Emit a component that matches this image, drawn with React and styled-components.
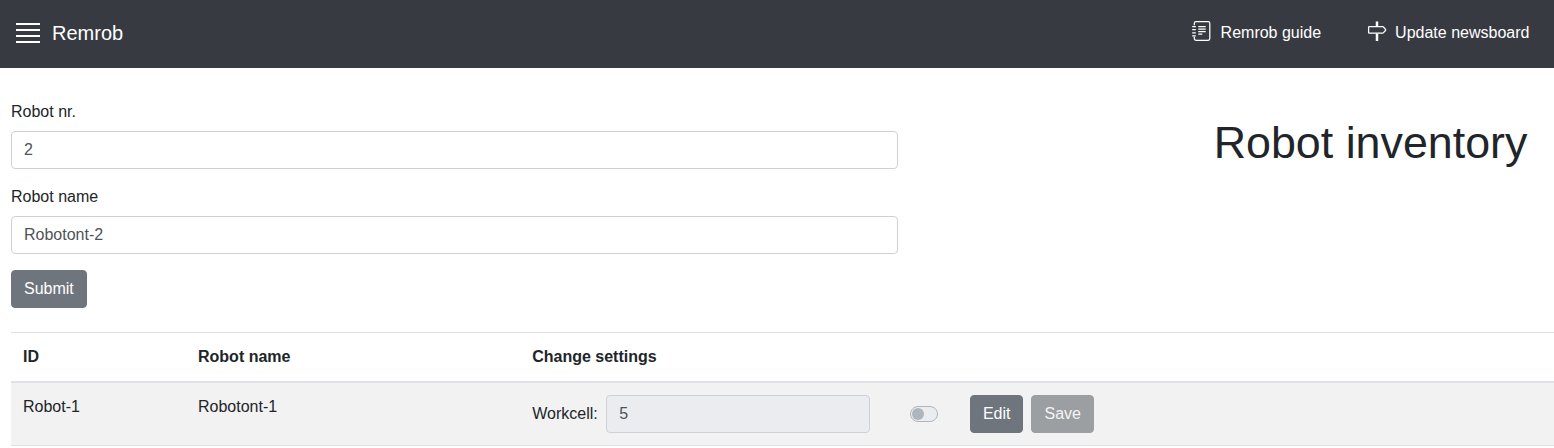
import React from "react";
import styled, { createGlobalStyle, css } from "styled-components";

const GlobalStyle = createGlobalStyle`
  *, *::before, *::after { box-sizing: border-box; }
  html, body { height: 100%; overflow: hidden; }
  body {
    margin: 0;
    background: #fff;
    color: #212529;
    font-family: "Liberation Sans", Arial, sans-serif;
    font-size: 16px;
    line-height: 1.5;
  }
  input, button { font: inherit; }
`;

const Navbar = styled.header`
  display: flex;
  align-items: center;
  height: 68px;
  padding: 0 24.6px 2px 16px;
  background: #373a41;
  color: #fff;
`;

const MenuButton = styled.button`
  display: flex;
  padding: 0;
  border: 0;
  background: none;
  color: inherit;
`;

const Brand = styled.span`
  margin-left: 12px;
  font-size: 20px;
  line-height: 30px;
`;

const NavLinks = styled.nav`
  display: flex;
  gap: 46px;
  margin-left: auto;
`;

const NavLink = styled.a`
  display: flex;
  align-items: center;
  gap: ${(p) => p.$gap || "9px"};
  height: 24px;
  color: #fff;

  svg { margin-bottom: 4px; }
`;

const Main = styled.main`
  padding: 32px 0 0 11px;
`;

const TopSection = styled.section`
  display: flex;
  justify-content: space-between;
  align-items: flex-start;
  padding-right: 26.6px;
`;

const RobotForm = styled.form`
  width: 887px;
`;

const Field = styled.div`
  margin-bottom: 16px;
`;

const Label = styled.label`
  display: block;
  height: 24px;
  margin-bottom: 7px;
`;

const Input = styled.input`
  display: block;
  width: ${(p) => p.$width || "100%"};
  height: 38px;
  padding: 6px 12px;
  border: 1px solid #ced2d8;
  border-radius: 4px;
  background: #fff;
  color: #4f5358;

  &:disabled { background: #ebecf0; }
`;

const Button = styled.button`
  height: 38px;
  padding: 6px 12px;
  border: 1px solid #6f757d;
  border-radius: 4px;
  background: #6f757d;
  color: #fff;

  ${(p) =>
    p.disabled &&
    css`
      border-color: #9b9fa2;
      background: #9b9fa2;
      color: #f4f4f4;
    `}
`;

const Title = styled.h1`
  margin: 15px 0 0;
  font-size: 44.8px;
  font-weight: 400;
  line-height: 54px;
`;

const Table = styled.table`
  width: 100%;
  margin-top: 24px;
  border-collapse: separate;
  border-spacing: 0;
  table-layout: fixed;
`;

const HeadCell = styled.th`
  width: ${(p) => p.$width || "auto"};
  height: 51px;
  padding: 0 12px;
  border-top: 1px solid #dee2e6;
  border-bottom: 2px solid #dee2e6;
  font-weight: 700;
  text-align: left;
`;

const Cell = styled.td`
  height: 63px;
  padding: 12px 12px 0;
  border-bottom: 1px solid #dee2e6;
  background: #f2f2f2;
  vertical-align: top;
`;

const Settings = styled.div`
  display: flex;
  align-items: center;
`;

const WorkcellLabel = styled.label`
  width: 74px;
`;

const Switch = styled.span`
  display: flex;
  align-items: center;
  width: 28px;
  height: 16px;
  margin: 0 31.7px 0 40px;
  padding: 1px;
  border: 1px solid #adb5bd;
  border-radius: 8px;
  background: #ebecf0;

  &::before {
    content: "";
    width: 12px;
    height: 12px;
    border-radius: 50%;
    background: #adb5bd;
  }
`;

const ButtonGroup = styled.div`
  display: flex;
  gap: 8px;
`;

const MenuIcon = () => (
  <svg width="24" height="24" viewBox="0 0 24 24" fill="currentColor">
    <path d="M0 2h24v2H0zM0 8h24v2H0zM0 14h24v2H0zM0 20h24v2H0z" />
  </svg>
);

const GuideIcon = () => (
  <svg width="20" height="20" viewBox="0 0 20 20" fill="none" stroke="currentColor" strokeWidth="1.25">
    <path d="M3.3 4.2V2.4Q3.3.7 5 .7h12.2q1.6 0 1.6 1.7v15.2q0 1.7-1.6 1.7H5q-1.7 0-1.7-1.7v-1.8" />
    <path d="M1.2 5.7h3.6M1.2 8.7h3.6M1.2 11.8h3.6M1.2 14.8h3.6M7.3 5.6h7.4M7.3 8.1h7.4M7.3 10.6h7.4M7.3 13.1h4" />
  </svg>
);

const SignpostIcon = () => (
  <svg width="20" height="20" viewBox="0 0 20 20" fill="none" stroke="currentColor">
    <path d="M10 .6V5M10 12.5V20" strokeWidth="2.5" />
    <path d="M2.2 5.5h13.3q.6 0 1 .5l2 2.3q.5.6 0 1.2l-2 2.2q-.4.5-1 .5H2.2q-.6 0-.6-.6V6.1q0-.6.6-.6Z" strokeWidth="1.25" />
  </svg>
);

export default function App() {
  return (
    <>
      <GlobalStyle />
      <Navbar>
        <MenuButton aria-label="Menu"><MenuIcon /></MenuButton>
        <Brand>Remrob</Brand>
        <NavLinks>
          <NavLink $gap="10px"><GuideIcon />Remrob guide</NavLink>
          <NavLink $gap="8px"><SignpostIcon />Update newsboard</NavLink>
        </NavLinks>
      </Navbar>
      <Main>
        <TopSection>
          <RobotForm>
            <Field>
              <Label htmlFor="nr">Robot nr.</Label>
              <Input id="nr" defaultValue="2" />
            </Field>
            <Field>
              <Label htmlFor="name">Robot name</Label>
              <Input id="name" defaultValue="Robotont-2" />
            </Field>
            <Button type="button">Submit</Button>
          </RobotForm>
          <Title>Robot inventory</Title>
        </TopSection>
        <Table>
          <thead>
            <tr>
              <HeadCell $width="175px">ID</HeadCell>
              <HeadCell $width="334.2px">Robot name</HeadCell>
              <HeadCell>Change settings</HeadCell>
            </tr>
          </thead>
          <tbody>
            <tr>
              <Cell>Robot-1</Cell>
              <Cell>Robotont-1</Cell>
              <Cell>
                <Settings>
                  <WorkcellLabel htmlFor="cell">Workcell:</WorkcellLabel>
                  <Input id="cell" $width="264px" defaultValue="5" disabled />
                  <Switch />
                  <ButtonGroup>
                    <Button type="button">Edit</Button>
                    <Button type="button" disabled>Save</Button>
                  </ButtonGroup>
                </Settings>
              </Cell>
            </tr>
          </tbody>
        </Table>
      </Main>
    </>
  );
}
